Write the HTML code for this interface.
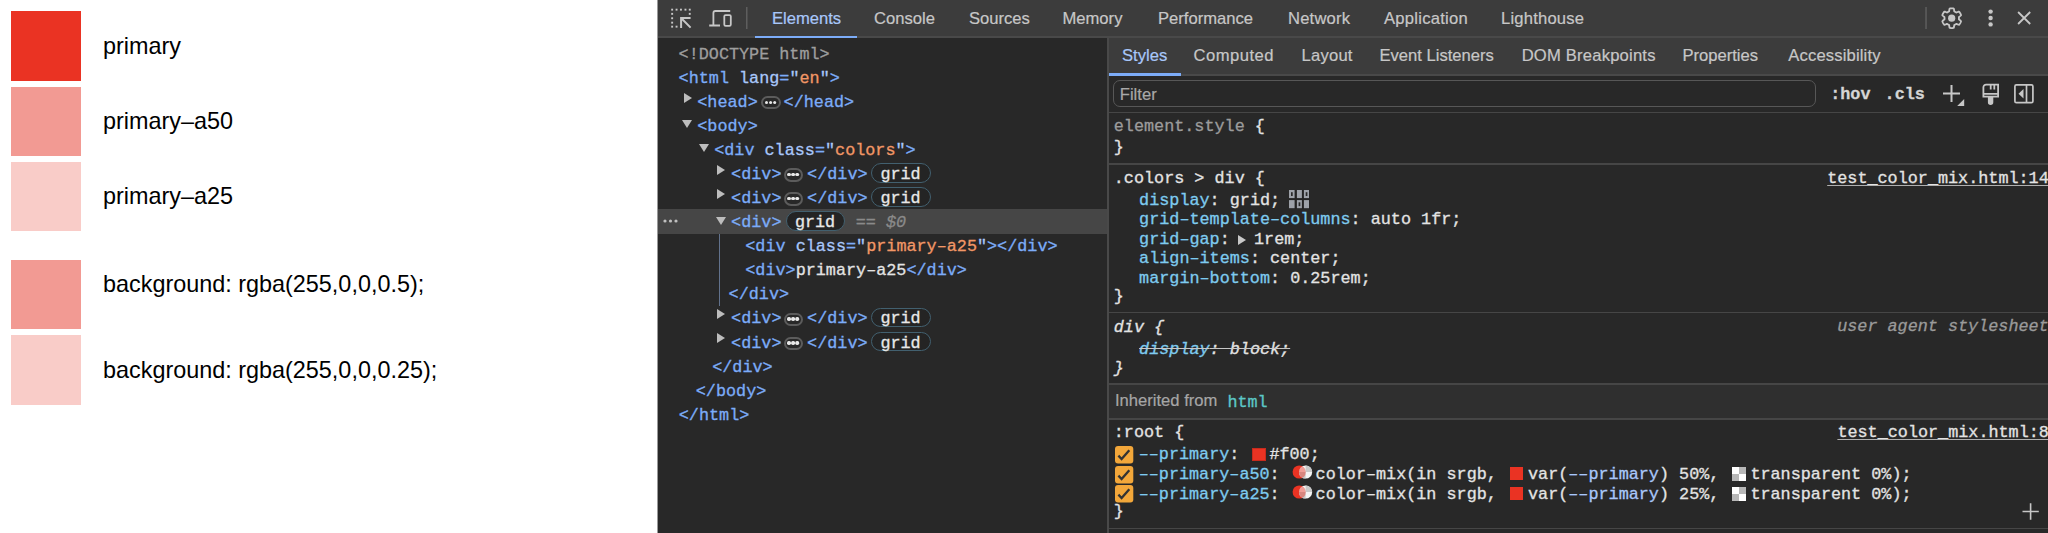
<!DOCTYPE html>
<html><head><meta charset="utf-8">
<style>
*{box-sizing:border-box}
html,body{margin:0;padding:0}
body{width:2048px;height:533px;overflow:hidden;position:relative;background:#fff;font-family:"Liberation Sans",sans-serif}
.a{position:absolute}
.t{position:absolute;white-space:pre;line-height:20px}
.sq{position:absolute;left:11px;width:70px;height:70px}
.pt{position:absolute;left:103px;font-size:23.4px;line-height:30px;color:#000;white-space:pre}
#dt{position:absolute;left:658px;top:0;width:1390px;height:533px;background:#282828;overflow:hidden}
#edge{position:absolute;left:657px;top:0;width:1px;height:533px;background:#9a9a9a}
.tb{position:absolute;left:0;top:0;width:1390px;height:36px;background:#3c3c3c}
.tbb{position:absolute;left:0;top:36px;width:1390px;height:2px;background:#494949}
.tab{position:absolute;font-size:16.6px;color:#c7c7c7;line-height:20px;white-space:pre;-webkit-text-stroke:0.2px currentColor}
.m{font-family:"Liberation Mono",monospace;font-size:16.8px;-webkit-text-stroke:0.3px currentColor}
.tg{color:#7cacf8}.an{color:#a8c7fa}.av{color:#f29766}.gr{color:#9e9e9e}.tx{color:#e3e3e3}
.pr{color:#7ecbef}.vl{color:#e3e3e3}.vn{color:#a8c7fa}
.tri-r{position:absolute;width:0;height:0;border-top:5.2px solid transparent;border-bottom:5.2px solid transparent;border-left:8px solid #bdbdbd}
.tri-d{position:absolute;width:0;height:0;border-left:5.4px solid transparent;border-right:5.4px solid transparent;border-top:8px solid #bdbdbd}
.ell{position:absolute;width:19.3px;height:13.7px;border:2.1px solid #5c5c5c;border-radius:7px}
.ell:after{content:"";position:absolute;left:1.7px;top:2.9px;width:3.3px;height:3.3px;border-radius:50%;background:#e8e8e8;box-shadow:4.1px 0 0 #e8e8e8,8.2px 0 0 #e8e8e8}
.badge{position:absolute;height:19.6px;border:1.9px solid #42606f;border-radius:10px;background:#242424;color:#e8e8e8;white-space:pre}
</style></head><body>
<div class="sq" style="top:11px;background:#ea3323"></div>
<div class="sq" style="top:86.5px;height:69.7px;background:#f29a93"></div>
<div class="sq" style="top:161.6px;height:69.7px;background:#f9ccc8"></div>
<div class="sq" style="top:259.5px;height:69.5px;background:#f29a93"></div>
<div class="sq" style="top:334.5px;height:70px;background:#f9ccc8"></div>
<div class="pt" style="top:31.2px">primary</div>
<div class="pt" style="top:106.3px">primary–a50</div>
<div class="pt" style="top:181.4px">primary–a25</div>
<div class="pt" style="top:268.9px">background: rgba(255,0,0,0.5);</div>
<div class="pt" style="top:354.9px">background: rgba(255,0,0,0.25);</div>
<div id="edge"></div>
<div id="dt">
<div class="tb"></div><div class="tbb"></div>
<svg class="a" style="left:0;top:0" width="1390" height="38">
<g fill="#c7c7c7">
<rect x="13.2" y="8.7" width="1.9" height="1.9"/><rect x="17.6" y="8.7" width="1.9" height="1.9"/><rect x="22" y="8.7" width="1.9" height="1.9"/><rect x="26.5" y="8.7" width="1.9" height="1.9"/><rect x="30.8" y="8.7" width="1.9" height="1.9"/>
<rect x="13.2" y="12.9" width="1.9" height="1.9"/><rect x="13.2" y="17.3" width="1.9" height="1.9"/><rect x="13.2" y="21.7" width="1.9" height="1.9"/><rect x="13.2" y="25.7" width="1.9" height="1.9"/>
<rect x="30.8" y="12.9" width="1.9" height="1.9"/><rect x="17.6" y="25.7" width="1.9" height="1.9"/>
</g>
<g stroke="#c7c7c7" stroke-width="1.8" fill="none">
<path d="M22.2,18 H32.6 M23.1,17.1 V28 M23.1,18 L32.6,27.6" stroke-width="2"/>
<path d="M55.4,25.5 V13 a2,2 0 0 1 2,-2 H72.2 M51.2,25.5 H62"/><rect x="66.3" y="15.05" width="6.5" height="10.8" rx="1.3"/>
</g>
<rect x="88" y="7" width="1.5" height="22" fill="#5e5e5e"/>
<rect x="1267.3" y="7" width="1.5" height="22" fill="#5e5e5e"/>
<g transform="translate(1293.7,18.2)"><path d="M0.00,-9.85 L0.34,-9.84 L0.69,-9.83 L1.03,-9.80 L1.37,-9.75 L1.71,-9.70 L2.05,-9.63 L2.26,-9.07 L2.39,-8.33 L2.47,-7.61 L2.52,-6.93 L2.72,-6.72 L2.95,-6.62 L3.18,-6.52 L3.40,-6.40 L3.62,-6.28 L3.84,-6.15 L4.05,-6.01 L4.26,-5.87 L4.46,-5.71 L4.74,-5.65 L5.35,-5.95 L6.02,-6.23 L6.72,-6.49 L7.32,-6.59 L7.55,-6.33 L7.76,-6.06 L7.97,-5.79 L8.17,-5.51 L8.35,-5.22 L8.53,-4.93 L8.70,-4.62 L8.85,-4.32 L9.00,-4.01 L9.13,-3.69 L9.26,-3.37 L9.37,-3.04 L8.98,-2.58 L8.41,-2.10 L7.83,-1.66 L7.27,-1.28 L7.18,-1.01 L7.21,-0.76 L7.23,-0.51 L7.25,-0.25 L7.25,-0.00 L7.25,0.25 L7.23,0.51 L7.21,0.76 L7.18,1.01 L7.27,1.28 L7.83,1.66 L8.41,2.10 L8.98,2.58 L9.37,3.04 L9.26,3.37 L9.13,3.69 L9.00,4.01 L8.85,4.32 L8.70,4.62 L8.53,4.92 L8.35,5.22 L8.17,5.51 L7.97,5.79 L7.76,6.06 L7.55,6.33 L7.32,6.59 L6.72,6.49 L6.02,6.23 L5.35,5.95 L4.74,5.65 L4.46,5.71 L4.26,5.87 L4.05,6.01 L3.84,6.15 L3.62,6.28 L3.40,6.40 L3.18,6.52 L2.95,6.62 L2.72,6.72 L2.52,6.93 L2.47,7.61 L2.39,8.33 L2.26,9.07 L2.05,9.63 L1.71,9.70 L1.37,9.75 L1.03,9.80 L0.69,9.83 L0.34,9.84 L0.00,9.85 L-0.34,9.84 L-0.69,9.83 L-1.03,9.80 L-1.37,9.75 L-1.71,9.70 L-2.05,9.63 L-2.26,9.07 L-2.39,8.33 L-2.47,7.61 L-2.52,6.93 L-2.72,6.72 L-2.95,6.62 L-3.18,6.52 L-3.40,6.40 L-3.63,6.28 L-3.84,6.15 L-4.05,6.01 L-4.26,5.87 L-4.46,5.71 L-4.74,5.65 L-5.35,5.95 L-6.02,6.23 L-6.72,6.49 L-7.32,6.59 L-7.55,6.33 L-7.76,6.06 L-7.97,5.79 L-8.17,5.51 L-8.35,5.22 L-8.53,4.93 L-8.70,4.62 L-8.85,4.32 L-9.00,4.01 L-9.13,3.69 L-9.26,3.37 L-9.37,3.04 L-8.98,2.58 L-8.41,2.10 L-7.83,1.66 L-7.27,1.28 L-7.18,1.01 L-7.21,0.76 L-7.23,0.51 L-7.25,0.25 L-7.25,0.00 L-7.25,-0.25 L-7.23,-0.51 L-7.21,-0.76 L-7.18,-1.01 L-7.27,-1.28 L-7.83,-1.66 L-8.41,-2.10 L-8.98,-2.58 L-9.37,-3.04 L-9.26,-3.37 L-9.13,-3.69 L-9.00,-4.01 L-8.85,-4.32 L-8.70,-4.62 L-8.53,-4.93 L-8.35,-5.22 L-8.17,-5.51 L-7.97,-5.79 L-7.76,-6.06 L-7.55,-6.33 L-7.32,-6.59 L-6.72,-6.49 L-6.02,-6.23 L-5.35,-5.95 L-4.74,-5.65 L-4.46,-5.71 L-4.26,-5.87 L-4.05,-6.01 L-3.84,-6.15 L-3.63,-6.28 L-3.40,-6.40 L-3.18,-6.52 L-2.95,-6.62 L-2.72,-6.72 L-2.52,-6.93 L-2.47,-7.61 L-2.39,-8.33 L-2.26,-9.07 L-2.05,-9.63 L-1.71,-9.70 L-1.37,-9.75 L-1.03,-9.80 L-0.69,-9.83 L-0.34,-9.84Z" fill="none" stroke="#c7c7c7" stroke-width="1.8" stroke-linejoin="round"/><circle cx="0" cy="0" r="3.6" fill="#c7c7c7"/></g>
<g fill="#c7c7c7"><circle cx="1332.6" cy="11.6" r="2.2"/><circle cx="1332.6" cy="18" r="2.2"/><circle cx="1332.6" cy="24.4" r="2.2"/></g>
<path d="M1360.1,12 L1372.2,24 M1372.2,12 L1360.1,24" stroke="#c7c7c7" stroke-width="1.8"/>
</svg>
<div class="a" style="left:97px;top:35.5px;width:102px;height:2.5px;background:#7cacf8"></div>

<div class="tab" style="left:114px;top:9.05px;color:#a8c7fa">Elements</div>
<div class="tab" style="left:216px;top:9.05px">Console</div>
<div class="tab" style="left:311px;top:9.05px">Sources</div>
<div class="tab" style="left:404.5px;top:9.05px">Memory</div>
<div class="tab" style="left:500px;top:9.05px">Performance</div>
<div class="tab" style="left:630px;top:9.05px;letter-spacing:0.2px">Network</div>
<div class="tab" style="left:726px;top:9.05px;letter-spacing:0.25px">Application</div>
<div class="tab" style="left:843px;top:9.05px;letter-spacing:0.2px">Lighthouse</div>
<div class="a" style="left:0;top:209.2px;width:449px;height:24.4px;background:#464646"></div>
<div class="t m" style="left:20.6px;top:44.72px"><span class="gr">&lt;!DOCTYPE html&gt;</span></div>
<div class="t m" style="left:20.6px;top:68.79px"><span class="tg">&lt;html </span><span class="an">lang</span><span class="tg">=</span><span class="an">"</span><span class="av">en</span><span class="an">"</span><span class="tg">&gt;</span></div>
<div class="tri-r" style="left:26.0px;top:92.7px"></div>
<div class="t m" style="left:39.3px;top:92.86px"><span class="tg">&lt;head&gt;</span></div>
<div class="ell" style="left:103.3px;top:95.8px"></div>
<div class="t m" style="left:125.6px;top:92.86px"><span class="tg">&lt;/head&gt;</span></div>
<div class="tri-d" style="left:24.1px;top:120.2px"></div>
<div class="t m" style="left:39.3px;top:116.93px"><span class="tg">&lt;body&gt;</span></div>
<div class="tri-d" style="left:41.0px;top:144.3px"></div>
<div class="t m" style="left:56.2px;top:141.00px"><span class="tg">&lt;div </span><span class="an">class</span><span class="tg">=</span><span class="an">"</span><span class="av">colors</span><span class="an">"</span><span class="tg">&gt;</span></div>
<div class="tri-r" style="left:59.0px;top:165.0px"></div>
<div class="t m" style="left:73.1px;top:165.07px"><span class="tg">&lt;div&gt;</span></div>
<div class="ell" style="left:125.8px;top:168.1px"></div>
<div class="t m" style="left:149.1px;top:165.07px"><span class="tg">&lt;/div&gt;</span></div>
<div class="badge" style="left:213.2px;top:163.2px;width:59.7px"></div>
<div class="t m" style="left:222.4px;top:165.07px;color:#e8e8e8">grid</div>
<div class="tri-r" style="left:59.0px;top:189.0px"></div>
<div class="t m" style="left:73.1px;top:189.14px"><span class="tg">&lt;div&gt;</span></div>
<div class="ell" style="left:125.8px;top:192.1px"></div>
<div class="t m" style="left:149.1px;top:189.14px"><span class="tg">&lt;/div&gt;</span></div>
<div class="badge" style="left:213.2px;top:187.2px;width:59.7px"></div>
<div class="t m" style="left:222.4px;top:189.14px;color:#e8e8e8">grid</div>
<div class="tri-r" style="left:59.0px;top:309.4px"></div>
<div class="t m" style="left:73.1px;top:309.49px"><span class="tg">&lt;div&gt;</span></div>
<div class="ell" style="left:125.8px;top:312.5px"></div>
<div class="t m" style="left:149.1px;top:309.49px"><span class="tg">&lt;/div&gt;</span></div>
<div class="badge" style="left:213.2px;top:307.6px;width:59.7px"></div>
<div class="t m" style="left:222.4px;top:309.49px;color:#e8e8e8">grid</div>
<div class="tri-r" style="left:59.0px;top:333.4px"></div>
<div class="t m" style="left:73.1px;top:333.56px"><span class="tg">&lt;div&gt;</span></div>
<div class="ell" style="left:125.8px;top:336.5px"></div>
<div class="t m" style="left:149.1px;top:333.56px"><span class="tg">&lt;/div&gt;</span></div>
<div class="badge" style="left:213.2px;top:331.6px;width:59.7px"></div>
<div class="t m" style="left:222.4px;top:333.56px;color:#e8e8e8">grid</div>
<svg class="a" style="left:5.0px;top:219.4px" width="16" height="4"><g fill="#c0c0c0"><circle cx="2" cy="2" r="1.6"/><circle cx="7.5" cy="2" r="1.6"/><circle cx="13" cy="2" r="1.6"/></g></svg>
<div class="tri-d" style="left:57.9px;top:216.5px"></div>
<div class="t m" style="left:73.1px;top:213.21px"><span class="tg">&lt;div&gt;</span></div>
<div class="badge" style="left:127.7px;top:211.3px;width:59.7px"></div>
<div class="t m" style="left:136.9px;top:213.21px;color:#e8e8e8">grid</div>
<div class="t m" style="left:197.8px;top:213.21px"><span style="color:#8a8a8a">==</span> <span style="color:#8a8a8a;font-style:italic">$0</span></div>
<div class="a" style="left:61.2px;top:233.7px;width:1.2px;height:72.5px;background:#62728c"></div>
<div class="t m" style="left:87.3px;top:237.28px"><span class="tg">&lt;div </span><span class="an">class</span><span class="tg">=</span><span class="an">"</span><span class="av">primary–a25</span><span class="an">"</span><span class="tg">&gt;&lt;/div&gt;</span></div>
<div class="t m" style="left:87.3px;top:261.35px"><span class="tg">&lt;div&gt;</span><span class="tx">primary–a25</span><span class="tg">&lt;/div&gt;</span></div>
<div class="t m" style="left:70.6px;top:285.42px"><span class="tg">&lt;/div&gt;</span></div>
<div class="t m" style="left:54.2px;top:357.63px"><span class="tg">&lt;/div&gt;</span></div>
<div class="t m" style="left:37.8px;top:381.70px"><span class="tg">&lt;/body&gt;</span></div>
<div class="t m" style="left:20.8px;top:405.77px"><span class="tg">&lt;/html&gt;</span></div>
<div class="a" style="left:449.00px;top:38.00px;width:1.50px;height:495.00px;background:#494949"></div>
<div class="a" style="left:450.50px;top:38.00px;width:939.50px;height:36.00px;background:#3c3c3c"></div>
<div class="a" style="left:450.50px;top:74.00px;width:939.50px;height:1.50px;background:#494949"></div>
<div class="a" style="left:450.50px;top:73.00px;width:72.50px;height:2.50px;background:#7cacf8"></div>
<div class="tab" style="left:464.0px;top:46.45px;color:#a8c7fa">Styles</div>
<div class="tab" style="left:535.5px;top:46.45px;letter-spacing:0.5px">Computed</div>
<div class="tab" style="left:643.6px;top:46.45px;letter-spacing:0.2px">Layout</div>
<div class="tab" style="left:721.5px;top:46.45px;letter-spacing:0px">Event Listeners</div>
<div class="tab" style="left:863.7px;top:46.45px;letter-spacing:0.2px">DOM Breakpoints</div>
<div class="tab" style="left:1024.4px;top:46.45px;letter-spacing:0px">Properties</div>
<div class="tab" style="left:1130.3px;top:46.45px;letter-spacing:0.15px">Accessibility</div>
<div class="a" style="left:455.2px;top:80px;width:702.6px;height:27.2px;border:1.5px solid #575757;border-radius:7px"></div>
<div class="tab" style="left:461.8px;top:84.55px;color:#a9a9a9">Filter</div>
<div class="t m" style="left:1172.2px;top:84.72px;font-weight:bold;color:#d5d5d5">:hov</div>
<div class="t m" style="left:1226.6px;top:84.72px;font-weight:bold;color:#d5d5d5">.cls</div>
<svg class="a" style="left:1282.0px;top:80px" width="110" height="30">
<g stroke="#c7c7c7" stroke-width="2" fill="none"><path d="M3,13.5 H20 M11.5,5 V22"/></g>
<path d="M24.2,19 L24.2,26 L17.2,26 Z" fill="#c7c7c7"/>
<g fill="none" stroke="#c7c7c7" stroke-width="1.8"><path d="M46.1,4.6 H58.1 V16.6 H43.4 V7.3 a2.7,2.7 0 0 1 2.7,-2.7 Z M43.4,13.9 H58.1 M50.7,4.6 V9.4 M54.3,4.6 V9.4"/></g>
<path d="M47.9,17 H53.3 V22.2 a2.7,2.7 0 0 1 -5.4,0 Z" fill="#c7c7c7"/>
<g fill="none" stroke="#c7c7c7" stroke-width="1.7"><rect x="74.9" y="4.9" width="18" height="17.8" rx="1.5"/><path d="M86.5,4.9 V22.7"/></g>
<path d="M83.5,9 L83.5,18.6 L78.5,13.8 Z" fill="#c7c7c7"/>
</svg>
<div class="a" style="left:450.50px;top:111.50px;width:939.50px;height:1.50px;background:#464646"></div>
<div class="t m" style="left:455.8px;top:117.02px"><span style="color:#9c9c9c">element.style</span> <span style="color:#e3e3e3">{</span></div>
<div class="t m" style="left:455.8px;top:138.12px"><span style="color:#e3e3e3">}</span></div>
<div class="a" style="left:450.50px;top:163.00px;width:939.50px;height:1.50px;background:#464646"></div>
<div class="t m" style="left:455.8px;top:168.92px"><span style="color:#e3e3e3">.colors &gt; div {</span></div>
<div class="t m" style="left:1169.2px;top:168.92px"><span style="color:#e3e3e3;text-decoration:underline;text-decoration-color:#b0b0b0;text-decoration-thickness:1.2px;text-underline-offset:2px">test_color_mix.html:14</span></div>
<div class="t m" style="left:481.1px;top:190.72px"><span class="pr">display</span><span class="vl">: grid;</span></div>
<svg class="a" style="left:631.1px;top:189.6px" width="21" height="19"><rect x="-1" y="-1.5" width="23" height="21.5" rx="2" fill="#232323"/><g fill="#9da1a8"><rect x="0" y="0" width="5.6" height="8.1"/><rect x="7.9" y="0" width="5" height="8.1"/><rect x="14.9" y="0" width="5.1" height="8.1"/><rect x="0" y="10.1" width="5.6" height="8.1"/><rect x="7.9" y="10.1" width="5" height="8.1"/><rect x="14.9" y="10.1" width="5.1" height="8.1"/></g><g fill="#2a2a2a"><rect x="2" y="2.2" width="1.7" height="3.8"/><rect x="16.7" y="2.2" width="1.7" height="3.8"/><rect x="9.6" y="12.3" width="1.7" height="3.8"/></g></svg>
<div class="t m" style="left:481.1px;top:210.42px"><span class="pr">grid–template–columns</span><span class="vl">: auto 1fr;</span></div>
<div class="t m" style="left:481.1px;top:229.82px"><span class="pr">grid–gap</span><span class="vl">:</span></div>
<div class="t m" style="left:596.0px;top:229.82px"><span class="vl">1rem;</span></div>
<div class="tri-r" style="left:579.7px;top:235.3px;border-left-color:#c8c8c8"></div>
<div class="t m" style="left:481.1px;top:249.32px"><span class="pr">align–items</span><span class="vl">: center;</span></div>
<div class="t m" style="left:481.1px;top:268.72px"><span class="pr">margin–bottom</span><span class="vl">: 0.25rem;</span></div>
<div class="t m" style="left:455.8px;top:286.72px"><span style="color:#e3e3e3">}</span></div>
<div class="a" style="left:450.50px;top:311.50px;width:939.50px;height:1.50px;background:#464646"></div>
<div class="t m" style="left:455.8px;top:317.52px"><span style="color:#e3e3e3;font-style:italic">div {</span></div>
<div class="t m" style="left:1179.2px;top:317.22px"><span style="color:#9a9a9a;font-style:italic">user agent stylesheet</span></div>
<div class="t m" style="left:481.1px;top:339.52px"><span style="font-style:italic;text-decoration:line-through;text-decoration-color:#c8c8c8"><span class="pr">display</span><span class="vl">: block;</span></span></div>
<div class="t m" style="left:455.8px;top:359.12px"><span style="color:#e3e3e3;font-style:italic">}</span></div>
<div class="a" style="left:450.50px;top:383.00px;width:939.50px;height:1.50px;background:#464646"></div>
<div class="a" style="left:450.50px;top:384.50px;width:939.50px;height:33.50px;background:#2f2f2f"></div>
<div class="tab" style="left:457.0px;top:391.45px;color:#a6a6a6">Inherited from</div>
<div class="t m" style="left:569.4px;top:393.02px"><span style="color:#5cc7c7">html</span></div>
<div class="a" style="left:450.50px;top:418.00px;width:939.50px;height:1.50px;background:#464646"></div>
<div class="t m" style="left:455.8px;top:422.52px"><span style="color:#e3e3e3">:root {</span></div>
<div class="t m" style="left:1179.4px;top:422.52px"><span style="color:#e3e3e3;text-decoration:underline;text-decoration-color:#b0b0b0;text-decoration-thickness:1.2px;text-underline-offset:2px">test_color_mix.html:8</span></div>
<svg class="a" style="left:457.0px;top:446.0px" width="19" height="18"><rect x="0" y="0" width="18.3" height="17.5" rx="3" fill="#f3a73a"/><path d="M3.4,9.6 L6.6,13 L14.3,4.2" stroke="#333" stroke-width="2.3" fill="none"/></svg>
<svg class="a" style="left:457.0px;top:465.7px" width="19" height="18"><rect x="0" y="0" width="18.3" height="17.5" rx="3" fill="#f3a73a"/><path d="M3.4,9.6 L6.6,13 L14.3,4.2" stroke="#333" stroke-width="2.3" fill="none"/></svg>
<svg class="a" style="left:457.0px;top:485.4px" width="19" height="18"><rect x="0" y="0" width="18.3" height="17.5" rx="3" fill="#f3a73a"/><path d="M3.4,9.6 L6.6,13 L14.3,4.2" stroke="#333" stroke-width="2.3" fill="none"/></svg>
<div class="t m" style="left:480.7px;top:444.82px"><span class="pr">––primary</span><span class="vl">:</span></div>
<div class="a" style="left:594.30px;top:447.80px;width:13.70px;height:13.00px;background:#ea3323;box-shadow:inset 0 0 0 1px rgba(0,0,0,.15)"></div>
<div class="t m" style="left:611.4px;top:444.82px"><span class="vl">#f00;</span></div>
<div class="t m" style="left:480.7px;top:464.52px"><span class="pr">––primary–a50</span><span class="vl">:</span></div>
<svg class="a" style="left:633.5px;top:465.2px" width="22" height="15"><defs><clipPath id="c0"><circle cx="13.6" cy="7" r="6.6"/></clipPath></defs><circle cx="7.2" cy="7" r="6.6" fill="#ea3323"/><g clip-path="url(#c0)"><rect x="6" y="0" width="16" height="15" fill="#f4f4f4"/><rect x="13.6" y="0" width="8" height="7" fill="#c8c8c8"/><rect x="6" y="7" width="7.6" height="8" fill="#c8c8c8"/><circle cx="7.2" cy="7" r="6.6" fill="#ea3323" fill-opacity="0.45"/></g></svg>
<div class="t m" style="left:657.6px;top:464.52px"><span class="vl">color–mix(in srgb,</span></div>
<div class="a" style="left:851.50px;top:467.20px;width:13.20px;height:13.00px;background:#ea3323"></div>
<div class="t m" style="left:870.0px;top:464.52px"><span class="vl">var(</span><span class="vn">––primary</span><span class="vl">) 50%,</span></div>
<svg class="a" style="left:1073.6px;top:467.2px" width="14" height="14"><rect x="0" y="0" width="14" height="14" fill="#e8e8e8"/><rect x="0" y="0" width="7" height="7" fill="#ffffff"/><rect x="7" y="7" width="7" height="7" fill="#ffffff"/><rect x="7" y="0" width="7" height="7" fill="#b8b8b8"/><rect x="0" y="7" width="7" height="7" fill="#b8b8b8"/></svg>
<div class="t m" style="left:1092.4px;top:464.52px"><span class="vl">transparent 0%);</span></div>
<div class="t m" style="left:480.7px;top:484.72px"><span class="pr">––primary–a25</span><span class="vl">:</span></div>
<svg class="a" style="left:633.5px;top:485.4px" width="22" height="15"><defs><clipPath id="c1"><circle cx="13.6" cy="7" r="6.6"/></clipPath></defs><circle cx="7.2" cy="7" r="6.6" fill="#ea3323"/><g clip-path="url(#c1)"><rect x="6" y="0" width="16" height="15" fill="#f4f4f4"/><rect x="13.6" y="0" width="8" height="7" fill="#c8c8c8"/><rect x="6" y="7" width="7.6" height="8" fill="#c8c8c8"/><circle cx="7.2" cy="7" r="6.6" fill="#ea3323" fill-opacity="0.45"/></g></svg>
<div class="t m" style="left:657.6px;top:484.72px"><span class="vl">color–mix(in srgb,</span></div>
<div class="a" style="left:851.50px;top:487.40px;width:13.20px;height:13.00px;background:#ea3323"></div>
<div class="t m" style="left:870.0px;top:484.72px"><span class="vl">var(</span><span class="vn">––primary</span><span class="vl">) 25%,</span></div>
<svg class="a" style="left:1073.6px;top:487.4px" width="14" height="14"><rect x="0" y="0" width="14" height="14" fill="#e8e8e8"/><rect x="0" y="0" width="7" height="7" fill="#ffffff"/><rect x="7" y="7" width="7" height="7" fill="#ffffff"/><rect x="7" y="0" width="7" height="7" fill="#b8b8b8"/><rect x="0" y="7" width="7" height="7" fill="#b8b8b8"/></svg>
<div class="t m" style="left:1092.4px;top:484.72px"><span class="vl">transparent 0%);</span></div>
<div class="t m" style="left:455.8px;top:502.02px"><span style="color:#e3e3e3">}</span></div>
<svg class="a" style="left:1363.5px;top:503px" width="18" height="18"><path d="M0.5,8.5 H16.8 M8.6,0.3 V16.7" stroke="#c7c7c7" stroke-width="1.6"/></svg>
<div class="a" style="left:450.50px;top:527.50px;width:939.50px;height:1.50px;background:#464646"></div>
</div>
</body></html>
